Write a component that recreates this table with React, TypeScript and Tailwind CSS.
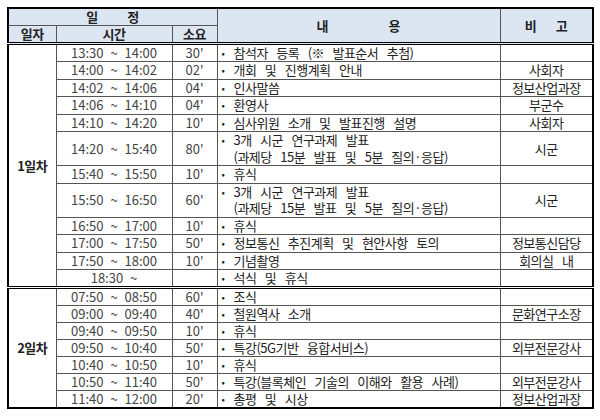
import React from "react";

type Row = {
  time: string;
  dur: string;
  content: string[];
  note: string;
  tall?: boolean;
};

const day1: Row[] = [
  { time: "13:30 ~ 14:00", dur: "30'", content: ["참석자 등록 (※ 발표순서 추첨)"], note: "" },
  { time: "14:00 ~ 14:02", dur: "02'", content: ["개회 및 진행계획 안내"], note: "사회자" },
  { time: "14:02 ~ 14:06", dur: "04'", content: ["인사말씀"], note: "정보산업과장" },
  { time: "14:06 ~ 14:10", dur: "04'", content: ["환영사"], note: "부군수" },
  { time: "14:10 ~ 14:20", dur: "10'", content: ["심사위원 소개 및 발표진행 설명"], note: "사회자" },
  {
    time: "14:20 ~ 15:40",
    dur: "80'",
    content: ["3개 시군 연구과제 발표", "(과제당 15분 발표 및 5분 질의·응답)"],
    note: "시군",
    tall: true,
  },
  { time: "15:40 ~ 15:50", dur: "10'", content: ["휴식"], note: "" },
  {
    time: "15:50 ~ 16:50",
    dur: "60'",
    content: ["3개 시군 연구과제 발표", "(과제당 15분 발표 및 5분 질의·응답)"],
    note: "시군",
    tall: true,
  },
  { time: "16:50 ~ 17:00", dur: "10'", content: ["휴식"], note: "" },
  { time: "17:00 ~ 17:50", dur: "50'", content: ["정보통신 추진계획 및 현안사항 토의"], note: "정보통신담당" },
  { time: "17:50 ~ 18:00", dur: "10'", content: ["기념촬영"], note: "회의실 내" },
  { time: "18:30 ~", dur: "", content: ["석식 및 휴식"], note: "" },
];

const day2: Row[] = [
  { time: "07:50 ~ 08:50", dur: "60'", content: ["조식"], note: "" },
  { time: "09:00 ~ 09:40", dur: "40'", content: ["철원역사 소개"], note: "문화연구소장" },
  { time: "09:40 ~ 09:50", dur: "10'", content: ["휴식"], note: "" },
  { time: "09:50 ~ 10:40", dur: "50'", content: ["특강(5G기반 융합서비스)"], note: "외부전문강사" },
  { time: "10:40 ~ 10:50", dur: "10'", content: ["휴식"], note: "" },
  { time: "10:50 ~ 11:40", dur: "50'", content: ["특강(블록체인 기술의 이해와 활용 사례)"], note: "외부전문강사" },
  { time: "11:40 ~ 12:00", dur: "20'", content: ["총평 및 시상"], note: "정보산업과장" },
];

const cell = "border border-[#555] p-0 align-middle";
const dbl = " border-b-[3px] border-b-black border-double";

const DayRows = ({ label, rows, last }: { label: string; rows: Row[]; last?: boolean }) => (
  <>
    {rows.map((r, i) => {
      const edge = i === rows.length - 1 && !last ? dbl : "";
      const h = r.tall ? "h-[34px]" : last ? "h-[17px]" : "h-[17.5px]";
      return (
        <tr key={r.time} className={h}>
          {i === 0 && (
            <td
              rowSpan={rows.length}
              className={`${cell} text-center font-bold text-[13px] tracking-[-0.5px] text-[#222]${last ? "" : dbl}`}
            >
              {label}
            </td>
          )}
          <td className={`${cell}${edge} text-center text-[#444] [word-spacing:4px]`}>{r.time}</td>
          <td className={`${cell}${edge} text-center text-[#444]`}>{r.dur}</td>
          <td className={`${cell}${edge} pl-[4px] text-[#222] tracking-[-0.5px] [word-spacing:6px]`}>
            <div className="flex">
              <span className="w-[12px] shrink-0 text-[10px]">•</span>
              <div className={`flex flex-col ${r.tall ? "leading-[16.5px]" : "leading-[16px]"}`}>
                {r.content.map((c) => (
                  <span key={c} className="whitespace-nowrap">
                    {c}
                  </span>
                ))}
              </div>
            </div>
          </td>
          <td className={`${cell}${edge} text-center text-[#222] tracking-[-0.5px] [word-spacing:6px]`}>{r.note}</td>
        </tr>
      );
    })}
  </>
);

export default function App() {
  return (
    <div className="w-[600px] h-[420px] bg-white pt-[7px] pl-[7px] font-['Noto_Sans_CJK_KR',sans-serif] text-[13px] leading-[16px]">
      <table className="table-fixed border-collapse border-2 border-black w-[585px]">
        <colgroup>
          <col className="w-[48px]" />
          <col className="w-[116px]" />
          <col className="w-[45px]" />
          <col className="w-[283px]" />
          <col className="w-[93px]" />
        </colgroup>
        <thead>
          <tr className="h-[16px] bg-[#dce6f2]">
            <th colSpan={3} className={`${cell} font-bold text-[#222]`}>
              <div className="flex justify-center gap-[29px]">
                <span>일</span>
                <span>정</span>
              </div>
            </th>
            <th rowSpan={2} className={`${cell}${dbl} font-bold text-[#222]`}>
              <div className="flex justify-center gap-[60px]">
                <span>내</span>
                <span>용</span>
              </div>
            </th>
            <th rowSpan={2} className={`${cell}${dbl} font-bold text-[#222]`}>
              <div className="flex justify-center gap-[19px]">
                <span>비</span>
                <span>고</span>
              </div>
            </th>
          </tr>
          <tr className="h-[16px] bg-[#dce6f2]">
            <th className={`${cell}${dbl} font-bold text-[#222] tracking-[-0.5px]`}>일자</th>
            <th className={`${cell}${dbl} font-bold text-[#222] tracking-[-0.5px]`}>시간</th>
            <th className={`${cell}${dbl} font-bold text-[#222] tracking-[-0.5px]`}>소요</th>
          </tr>
        </thead>
        <tbody>
          <DayRows label="1일차" rows={day1} />
          <DayRows label="2일차" rows={day2} last />
        </tbody>
      </table>
    </div>
  );
}
